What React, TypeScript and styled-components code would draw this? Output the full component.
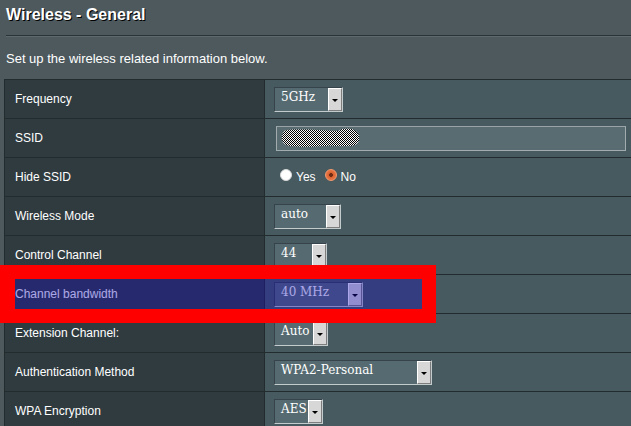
import React from "react";
import styled, { createGlobalStyle } from "styled-components";

const GlobalStyle = createGlobalStyle`
  html, body {
    margin: 0;
    padding: 0;
    background: #4d595d;
    overflow: hidden;
  }
  body {
    font-family: "Liberation Sans", Arial, sans-serif;
  }
`;

const Page = styled.div`
  position: relative;
  width: 631px;
  height: 426px;
  overflow: hidden;
  background: #4d595d;
`;

const Title = styled.h1`
  margin: 0;
  padding: 5px 0 0 6px;
  font: bold 16px/20px "Liberation Sans", Arial, sans-serif;
  color: #ffffff;
  text-shadow: 1px 1px 0 #000000;
`;

const SplitLine = styled.div`
  margin: 10px 0 0 6px;
  height: 1px;
  background: #2a3336;
  border-bottom: 1px solid #5c6a6e;
`;

const Subtitle = styled.p`
  margin: 14px 0 0 6px;
  font: 13px/16px "Liberation Sans", Arial, sans-serif;
  color: #ffffff;
`;

const FormTable = styled.div`
  margin: 12px 0 0 4px;
  width: 760px;
  border-top: 1px solid #222b2e;
  border-left: 1px solid #222b2e;
  display: flex;
  flex-direction: column;
`;

const Row = styled.div`
  display: flex;
  height: 38px;
  border-bottom: 1px solid #222b2e;
`;

const LabelCell = styled.div`
  width: 260px;
  flex: none;
  box-sizing: border-box;
  padding-left: 10px;
  display: flex;
  align-items: center;
  background: #2f3b3f;
  border-right: 1px solid #222b2e;
  font: 12px/14px "Liberation Sans", Arial, sans-serif;
  color: #ffffff;
`;

const ValueCell = styled.div`
  flex: 1;
  display: flex;
  align-items: center;
  padding-left: 9px;
  background: #475a5f;
`;

const Select = styled.div<{ $w: number }>`
  display: flex;
  width: ${(p) => p.$w}px;
  height: 25px;
  box-sizing: border-box;
  background: #566b71;
  border-top: 1px solid #36434a;
  border-left: 1px solid #36434a;
  border-right: 1px solid #c4cbcc;
  border-bottom: 1px solid #c4cbcc;
`;

const SelectText = styled.span`
  flex: 1;
  padding-left: 6px;
  font: 12px/19px "DejaVu Serif", "Liberation Serif", serif;
  color: #ffffff;
  white-space: nowrap;
  overflow: hidden;
`;

const ArrowButton = styled.span`
  flex: none;
  width: 14px;
  box-sizing: border-box;
  background: #d7d7d7;
  border-top: 1px solid #ffffff;
  border-left: 1px solid #ffffff;
  border-right: 1px solid #7d7d7d;
  border-bottom: 1px solid #7d7d7d;
  display: flex;
  align-items: center;
  justify-content: center;
  padding-top: 2px;

  &::after {
    content: "";
    width: 0;
    height: 0;
    border-left: 3px solid transparent;
    border-right: 3px solid transparent;
    border-top: 3px solid #000000;
  }
`;

const TextInput = styled.div`
  margin-left: 2px;
  width: 350px;
  height: 25px;
  box-sizing: border-box;
  background: #586c72;
  border: 1px solid #a2acaf;
  border-top-color: #9aa4a7;
  display: flex;
  align-items: center;
  padding-left: 5px;
`;

const RadioGroup = styled.div`
  display: flex;
  align-items: center;
  margin-left: 6px;
  font: 12px/14px "Liberation Sans", Arial, sans-serif;
  color: #ffffff;
`;

const Radio = styled.span<{ $checked?: boolean }>`
  width: 12px;
  height: 12px;
  box-sizing: border-box;
  border-radius: 50%;
  margin-bottom: 4px;
  border: 1px solid ${(p) => (p.$checked ? "#f29a6e" : "#d8d8d8")};
  background: ${(p) =>
    p.$checked
      ? "radial-gradient(circle, #6e2c15 0 1.6px, #d9602f 2.2px, #e4703f 4px)"
      : "#ffffff"};
`;

const RadioLabel = styled.span<{ $gap: number }>`
  margin-left: 4px;
  margin-right: ${(p) => p.$gap}px;
`;

const Highlight = styled.div`
  position: absolute;
  left: 0;
  top: 265px;
  width: 436px;
  height: 58px;
  box-sizing: border-box;
  border: 14px solid #ff0000;
  border-left-width: 15px;
  background: rgba(22, 12, 190, 0.36);
  pointer-events: none;
`;

const SsidMask = () => (
  <svg width="78" height="20" viewBox="0 0 78 20">
    <defs>
      <pattern id="chk" width="2" height="2" patternUnits="userSpaceOnUse">
        <rect width="2" height="2" fill="#ffffff" />
        <rect width="1" height="1" fill="#000000" />
        <rect x="1" y="1" width="1" height="1" fill="#000000" />
      </pattern>
    </defs>
    <path
      d="M6 2 C14 1 40 2 56 3 C60 0 66 0 70 1 C76 3 78 8 77 12 C76 17 70 19 64 18 C58 19 50 17 44 18 C30 19 16 19 8 18 C2 17 0 14 0 10 C0 5 2 2 6 2 Z"
      fill="url(#chk)"
    />
  </svg>
);

const SelectField = ({ value, w }: { value: string; w: number }) => (
  <Select $w={w}>
    <SelectText>{value}</SelectText>
    <ArrowButton />
  </Select>
);

const selectRows: { label: string; value: string; w: number }[] = [
  { label: "Wireless Mode", value: "auto", w: 67 },
  { label: "Control Channel", value: "44", w: 53 },
  { label: "Channel bandwidth", value: "40 MHz", w: 89 },
  { label: "Extension Channel:", value: "Auto", w: 54 },
  { label: "Authentication Method", value: "WPA2-Personal", w: 158 },
  { label: "WPA Encryption", value: "AES", w: 49 },
];

export default function App() {
  return (
    <Page>
      <GlobalStyle />
      <Title>Wireless - General</Title>
      <SplitLine />
      <Subtitle>Set up the wireless related information below.</Subtitle>
      <FormTable>
        <Row>
          <LabelCell>Frequency</LabelCell>
          <ValueCell>
            <SelectField value="5GHz" w={69} />
          </ValueCell>
        </Row>
        <Row>
          <LabelCell>SSID</LabelCell>
          <ValueCell>
            <TextInput>
              <SsidMask />
            </TextInput>
          </ValueCell>
        </Row>
        <Row>
          <LabelCell>Hide SSID</LabelCell>
          <ValueCell>
            <RadioGroup>
              <Radio />
              <RadioLabel $gap={9}>Yes</RadioLabel>
              <Radio $checked />
              <RadioLabel $gap={0}>No</RadioLabel>
            </RadioGroup>
          </ValueCell>
        </Row>
        {selectRows.map((r) => (
          <Row key={r.label}>
            <LabelCell>{r.label}</LabelCell>
            <ValueCell>
              <SelectField value={r.value} w={r.w} />
            </ValueCell>
          </Row>
        ))}
      </FormTable>
      <Highlight />
    </Page>
  );
}
